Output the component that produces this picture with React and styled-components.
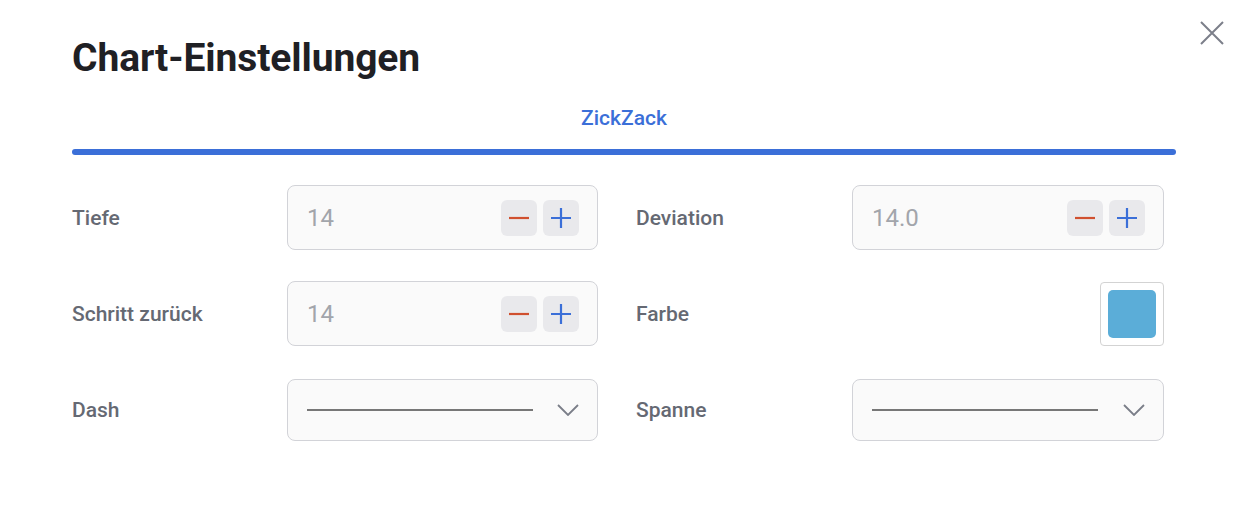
import React from 'react';
import styled, { createGlobalStyle } from 'styled-components';

const GlobalStyle = createGlobalStyle`
  html, body {
    margin: 0;
    padding: 0;
    background: #ffffff;
    font-family: Roboto, "Liberation Sans", sans-serif;
  }
`;

const Dialog = styled.div`
  position: relative;
  width: 1250px;
  height: 526px;
  box-sizing: border-box;
  padding: 35px 74px 0 72px;
  background: #fff;
`;

const Title = styled.h1`
  margin: 0;
  font-size: 39px;
  line-height: 46px;
  font-weight: 700;
  color: #1f2024;
  letter-spacing: -0.1px;
`;

const Close = styled.button`
  position: absolute;
  top: 17px;
  right: 22px;
  width: 32px;
  height: 32px;
  padding: 0;
  border: none;
  background: none;
  cursor: pointer;
  display: flex;
  align-items: center;
  justify-content: center;
`;

const Tabs = styled.div`
  margin-top: 24px;
  display: flex;
  flex-direction: column;
`;

const Tab = styled.div`
  text-align: center;
  font-size: 21px;
  font-weight: 500;
  line-height: 26px;
  color: #3b6fd8;
  padding-bottom: 18px;
`;

const TabBar = styled.div`
  height: 6px;
  border-radius: 3px;
  background: #3b6fd8;
`;

const Grid = styled.div`
  margin-top: 30px;
  display: grid;
  grid-template-columns: 526px 528px;
  column-gap: 38px;
  row-gap: 31px;
`;

const Field = styled.div`
  display: grid;
  grid-template-columns: ${(p) => (p.right ? 216 : 215)}px 1fr;
  align-items: center;
  height: 65px;
`;

const Label = styled.span`
  font-size: 21px;
  font-weight: 500;
  color: #656973;
`;

const Box = styled.div`
  height: ${(p) => p.h || 65}px;
  box-sizing: border-box;
  border: 1px solid #d2d3d8;
  border-radius: 8px;
  background: #fafafa;
  display: flex;
  align-items: center;
  padding: 0 18px 0 19px;
`;

const Value = styled.span`
  flex: 1;
  font-size: 24px;
  color: #a2a5ab;
`;

const StepBtn = styled.button`
  width: 36px;
  height: 36px;
  margin-left: 6px;
  padding: 0;
  border: none;
  border-radius: 6px;
  background: #e9e9ec;
  display: flex;
  align-items: center;
  justify-content: center;
  cursor: pointer;
`;

const SwatchWrap = styled.div`
  display: flex;
  justify-content: flex-end;
`;

const SwatchFrame = styled.div`
  width: 64px;
  height: 64px;
  box-sizing: border-box;
  border: 1px solid #d3d3d3;
  border-radius: 4px;
  background: #fff;
  display: flex;
  align-items: center;
  justify-content: center;
`;

const Swatch = styled.div`
  width: 48px;
  height: 48px;
  border-radius: 5px;
  background: ${(p) => p.color};
`;

const DashLine = styled.div`
  width: 226px;
  height: 2px;
  background: #777;
  flex: none;
`;

const Chevron = styled.span`
  margin-left: auto;
  display: flex;
`;

function Stepper({ value }) {
  return (
    <Box>
      <Value>{value}</Value>
      <StepBtn aria-label="minus">
        <svg width="22" height="22" viewBox="0 0 22 22">
          <path d="M1 11h20" stroke="#d0502f" strokeWidth="2.2" />
        </svg>
      </StepBtn>
      <StepBtn aria-label="plus">
        <svg width="22" height="22" viewBox="0 0 22 22">
          <path d="M1 11h20M11 1v20" stroke="#3b6fd8" strokeWidth="2.2" />
        </svg>
      </StepBtn>
    </Box>
  );
}

function LineSelect() {
  return (
    <Box h={62}>
      <DashLine />
      <Chevron>
        <svg width="22" height="12" viewBox="0 0 22 12">
          <path d="M1 1l10 10L21 1" fill="none" stroke="#7a7e88" strokeWidth="1.8" />
        </svg>
      </Chevron>
    </Box>
  );
}

export default function App() {
  return (
    <>
      <GlobalStyle />
      <Dialog>
        <Close aria-label="close">
          <svg width="26" height="26" viewBox="0 0 26 26">
            <path d="M2 2l22 22M24 2L2 24" stroke="#7c7f8a" strokeWidth="2" />
          </svg>
        </Close>
        <Title>Chart-Einstellungen</Title>
        <Tabs>
          <Tab>ZickZack</Tab>
          <TabBar />
        </Tabs>
        <Grid>
          <Field>
            <Label>Tiefe</Label>
            <Stepper value="14" />
          </Field>
          <Field right>
            <Label>Deviation</Label>
            <Stepper value="14.0" />
          </Field>
          <Field>
            <Label>Schritt zurück</Label>
            <Stepper value="14" />
          </Field>
          <Field right>
            <Label>Farbe</Label>
            <SwatchWrap>
              <SwatchFrame>
                <Swatch color="#5badd8" />
              </SwatchFrame>
            </SwatchWrap>
          </Field>
          <Field>
            <Label>Dash</Label>
            <LineSelect />
          </Field>
          <Field right>
            <Label>Spanne</Label>
            <LineSelect />
          </Field>
        </Grid>
      </Dialog>
    </>
  );
}
